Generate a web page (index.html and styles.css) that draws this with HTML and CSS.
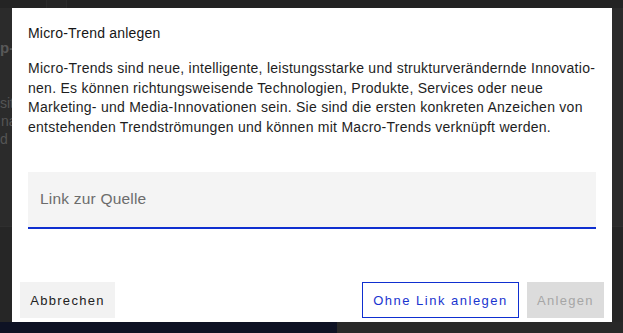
FILE: index.html
```html
<!DOCTYPE html>
<html lang="de">
<head>
<meta charset="utf-8">
<title>Micro-Trend anlegen</title>
<link rel="stylesheet" href="styles.css">
</head>
<body>
<div class="page">
  <div class="topbar">
    <div class="tb-a"></div>
    <div class="tb-b"></div>
    <div class="tb-c"></div>
  </div>
  <div class="content">
    <div class="heading">p-</div>
    <div class="lines">
      <div>sit</div>
      <div class="indent">na</div>
      <div>d c</div>
    </div>
  </div>
  <div class="lower"></div>
  <div class="footer">
    <div class="footer-navy"></div>
    <div class="footer-dark"></div>
  </div>
</div>

<div class="modal" role="dialog" aria-labelledby="mtitle">
  <h2 class="modal-title" id="mtitle">Micro-Trend anlegen</h2>
  <p class="modal-text">Micro-Trends sind neue, intelligente, leistungsstarke und strukturverändernde Innovatio-<br>nen. Es können richtungsweisende Technologien, Produkte, Services oder neue<br>Marketing- und Media-Innovationen sein. Sie sind die ersten konkreten Anzeichen von<br>entstehenden Trendströmungen und können mit Macro-Trends verknüpft werden.</p>
  <div class="field">
    <input class="field-input" type="text" placeholder="Link zur Quelle">
  </div>
  <div class="actions">
    <button class="btn btn-secondary">Abbrechen</button>
    <div class="actions-right">
      <button class="btn btn-outline">Ohne Link anlegen</button>
      <button class="btn btn-disabled" disabled>Anlegen</button>
    </div>
  </div>
</div>
</body>
</html>
```

FILE: styles.css
```css
* { box-sizing: border-box; }
html, body { margin: 0; padding: 0; }
body {
  width: 623px;
  height: 333px;
  overflow: hidden;
  background: #262626;
  font-family: "Liberation Sans", Arial, sans-serif;
  position: relative;
}

.page {
  display: flex;
  flex-direction: column;
  height: 333px;
}
.topbar {
  height: 8px;
  display: flex;
  background: #232323;
}
.tb-a { width: 46px; background: #242424; }
.tb-b { width: 20px; background: #262626; border-left: 1px solid #2c2c2c; }
.tb-c { flex: 1; background: #232323; border-left: 1px solid #2c2c2c; }

.content {
  height: 219px;
  width: 100%;
  background: #2b2b2b;
  padding: 31px 0 0 0;
  color: #5a5a5a;
  font-size: 14px;
  border-bottom: 1px solid #2f2f2f;
}
.heading {
  width: 12px;
  overflow: hidden;
  font-weight: bold;
  color: #585858;
  font-size: 15px;
  line-height: 18px;
  white-space: nowrap;
}
.lines {
  width: 12px;
  overflow: hidden;
  margin-top: 37px;
  line-height: 18px;
  color: #555;
  white-space: nowrap;
}
.lines .indent { padding-left: 1px; }
.lower { flex: 1; background: #262626; }
.footer { height: 11px; display: flex; }
.footer-navy { width: 337px; background: #0e1224; }
.footer-dark { flex: 1; background: #282828; }

.modal {
  position: absolute;
  left: 12px;
  top: 8px;
  width: 600px;
  height: 314px;
  background: #ffffff;
  padding: 16px 16px 4px 16px;
  display: flex;
  flex-direction: column;
  color: #161616;
}
.modal-title {
  margin: 0;
  font-size: 14px;
  font-weight: normal;
  letter-spacing: 0.2px;
  line-height: 18px;
}
.modal-text {
  margin: 17px 0 0 0;
  font-size: 14px;
  line-height: 19.7px;
  letter-spacing: 0.26px;
  color: #1e1e1e;
  white-space: nowrap;
}
.field {
  margin-top: 34px;
}
.field-input {
  display: block;
  width: 568px;
  height: 57px;
  border: none;
  border-bottom: 2px solid #0f2fd0;
  background: #f4f4f4;
  padding: 0 12px;
  font-family: inherit;
  font-size: 15.5px;
  letter-spacing: 0.2px;
  color: #161616;
  outline: none;
}
.field-input::placeholder { color: #6c6c6c; }

.actions {
  margin-top: auto;
  margin-left: -8px;
  margin-right: -8px;
  display: flex;
  justify-content: space-between;
  align-items: flex-end;
}
.actions-right { display: flex; gap: 8px; }
.btn {
  height: 36px;
  font-family: inherit;
  font-size: 13px;
  letter-spacing: 1.3px;
  padding: 0 9px;
  border: 1px solid transparent;
  cursor: pointer;
}
.btn-secondary { background: #f2f2f2; color: #222; width: 95px; }
.btn-outline { background: #fff; color: #1a35cf; border-color: #0f2fd0; width: 157px; letter-spacing: 1.5px; }
.btn-disabled { background: #dcdcdc; color: #a6a6a6; width: 77px; cursor: default; }
```
